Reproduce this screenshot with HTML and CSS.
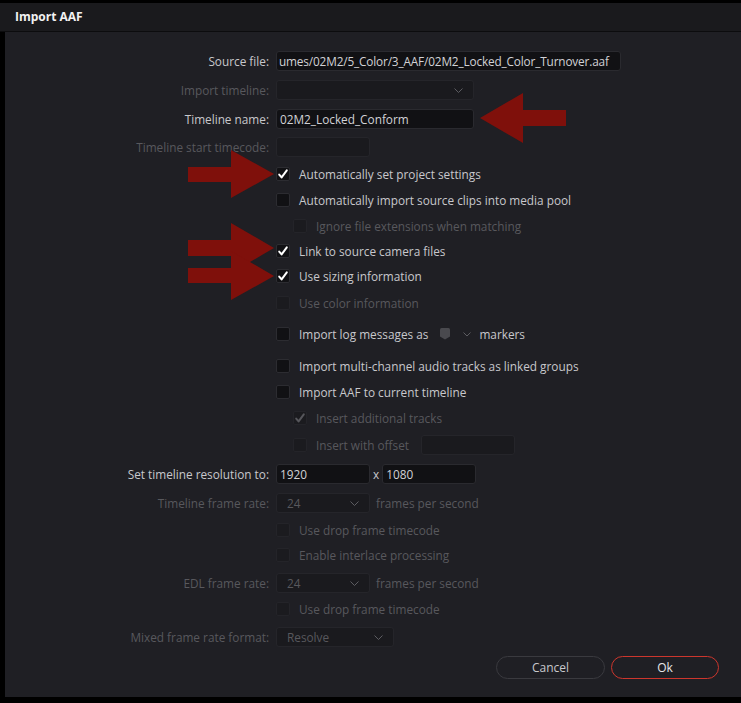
FILE: index.html
```html
<!DOCTYPE html>
<html>
<head>
<meta charset="utf-8">
<title>Import AAF</title>
<link rel="stylesheet" href="styles.css">
</head>
<body>
<div class="dialog">
  <div class="titlebar">Import AAF</div>
  <div class="panel">
    <div class="form">
      <div class="label">Source file:</div>
      <div class="ctrl"><div class="field w345 tight">umes/02M2/5_Color/3_AAF/02M2_Locked_Color_Turnover.aaf</div></div>

      <div class="label dis">Import timeline:</div>
      <div class="ctrl"><div class="field dis w198 select"><span></span><svg class="chev" width="9" height="5" viewBox="0 0 9 5"><polyline points="0.5,0.5 4.5,4.5 8.5,0.5"/></svg></div></div>

      <div class="label">Timeline name:</div>
      <div class="ctrl"><div class="field w198">02M2_Locked_Conform</div></div>

      <div class="label dis">Timeline start timecode:</div>
      <div class="ctrl"><div class="field dis w94"></div></div>

      <div class="ctrl"><div class="check"><span class="box on"><svg width="12" height="12" viewBox="0 0 12 12"><path class="tick" d="M2.2 6.6 L4.6 9.4 L9.8 2.4"/></svg></span><span>Automatically set project settings</span></div></div>
      <div class="ctrl"><div class="check"><span class="box"></span><span>Automatically import source clips into media pool</span></div></div>
      <div class="ctrl"><div class="check indent dis"><span class="box"></span><span>Ignore file extensions when matching</span></div></div>
      <div class="ctrl"><div class="check"><span class="box on"><svg width="12" height="12" viewBox="0 0 12 12"><path class="tick" d="M2.2 6.6 L4.6 9.4 L9.8 2.4"/></svg></span><span>Link to source camera files</span></div></div>
      <div class="ctrl"><div class="check"><span class="box on"><svg width="12" height="12" viewBox="0 0 12 12"><path class="tick" d="M2.2 6.6 L4.6 9.4 L9.8 2.4"/></svg></span><span>Use sizing information</span></div></div>
      <div class="ctrl"><div class="check dis"><span class="box"></span><span>Use color information</span></div></div>
      <div class="ctrl"><div class="check"><span class="box"></span><span>Import log messages as</span><span class="marker"><svg width="10" height="12" viewBox="0 0 10 12"><path d="M1.5 0 H8.5 Q10 0 10 1.5 V8.5 L5 11.5 L0 8.5 V1.5 Q0 0 1.5 0 Z"/></svg><svg class="chev" width="8" height="5" viewBox="0 0 8 5"><polyline points="0.5,0.5 4,4 7.5,0.5"/></svg></span><span>markers</span></div></div>
      <div class="ctrl"><div class="check"><span class="box"></span><span>Import multi-channel audio tracks as linked groups</span></div></div>
      <div class="ctrl"><div class="check"><span class="box"></span><span>Import AAF to current timeline</span></div></div>
      <div class="ctrl"><div class="check indent dis"><span class="box on"><svg width="12" height="12" viewBox="0 0 12 12"><path class="tick" d="M2.2 6.6 L4.6 9.4 L9.8 2.4"/></svg></span><span>Insert additional tracks</span></div></div>
      <div class="ctrl tall"><div class="check indent dis"><span class="box"></span><span>Insert with offset</span></div><div class="field dis w94 offset"></div></div>

      <div class="label">Set timeline resolution to:</div>
      <div class="ctrl"><div class="field w94">1920</div><span class="times">x</span><div class="field w94">1080</div></div>

      <div class="label dis">Timeline frame rate:</div>
      <div class="ctrl dis"><div class="field dis w94 select pad"><span>24</span><svg class="chev" width="9" height="5" viewBox="0 0 9 5"><polyline points="0.5,0.5 4.5,4.5 8.5,0.5"/></svg></div><span class="after">frames per second</span></div>

      <div class="ctrl"><div class="check dis"><span class="box"></span><span>Use drop frame timecode</span></div></div>
      <div class="ctrl"><div class="check dis"><span class="box"></span><span>Enable interlace processing</span></div></div>

      <div class="label dis">EDL frame rate:</div>
      <div class="ctrl dis"><div class="field dis w94 select pad"><span>24</span><svg class="chev" width="9" height="5" viewBox="0 0 9 5"><polyline points="0.5,0.5 4.5,4.5 8.5,0.5"/></svg></div><span class="after">frames per second</span></div>

      <div class="ctrl"><div class="check dis"><span class="box"></span><span>Use drop frame timecode</span></div></div>

      <div class="label dis">Mixed frame rate format:</div>
      <div class="ctrl"><div class="field dis w118 select pad"><span>Resolve</span><svg class="chev" width="9" height="5" viewBox="0 0 9 5"><polyline points="0.5,0.5 4.5,4.5 8.5,0.5"/></svg></div></div>
    </div>
    <div class="actions">
      <button class="btn">Cancel</button>
      <button class="btn ok">Ok</button>
    </div>
  </div>
</div>
<svg class="annotations" width="741" height="703" viewBox="0 0 741 703">
  <polygon points="480,118 523,93 523,110 566,110 566,126 523,126 523,143"/>
  <polygon points="188,167 231,167 231,150 274,174 231,198 231,182 188,182"/>
  <polygon points="188,240 231,240 231,223 274,248 231,273 231,256 188,256"/>
  <polygon points="188,268 231,268 231,251 274,276 231,300 231,283 188,283"/>
</svg>
</body>
</html>
```

FILE: styles.css
```css
html, body {
  margin: 0;
  padding: 0;
  background: #000;
}
body {
  font-family: "Open Sans", "Noto Sans", "DejaVu Sans", sans-serif;
  font-size: 11.8px;
  color: #c8c8cc;
  position: relative;
  width: 741px;
  height: 703px;
  overflow: hidden;
}
.dialog {
  margin-top: 3px;
  width: 741px;
  height: 694px;
  display: flex;
  flex-direction: column;
}
.titlebar {
  flex: none;
  height: 28px;
  line-height: 28px;
  padding-left: 15px;
  background: #1a1a1d;
  border-bottom: 1px solid #0c0c0e;
  color: #f2f2f2;
  font-weight: 700;
  font-size: 12px;
}
.panel {
  flex: 1;
  background: #1f1f24;
  border-left: 5px solid #000;
  padding-top: 19px;
  display: flex;
  flex-direction: column;
}
.form {
  display: grid;
  grid-template-columns: 264px auto;
  column-gap: 7px;
  grid-template-rows: 29px 29px 28px 30px 26px 26px 25px 25px 27px 31px 32px 26px 26px 24px 29px 29px 30px 25px 25px 29px 25px 29px;
  align-items: start;
}
.label {
  grid-column: 1;
  text-align: right;
  line-height: 20px;
  white-space: nowrap;
  color: #c8c8cc;
}
.label.dis { color: #58585d; }
.ctrl {
  grid-column: 2;
  display: flex;
  align-items: center;
  white-space: nowrap;
}
.ctrl.tall { height: 20px; }
.field {
  box-sizing: border-box;
  height: 20px;
  line-height: 18px;
  padding: 0 3px;
  background: #111114;
  border: 1px solid #2a2a2f;
  border-radius: 3px;
  color: #d2d2d6;
  overflow: hidden;
  white-space: nowrap;
}
.field.tight {
  letter-spacing: -0.15px;
  padding: 0 2px;
}
.field.dis {
  background: #1a1a1e;
  border-color: #25252a;
  color: #58585d;
}
.field.pad { padding-left: 10px; }
.select {
  display: flex;
  align-items: center;
  justify-content: space-between;
  padding-right: 10px;
}
.w345 { width: 345px; }
.w198 { width: 198px; }
.w118 { width: 118px; }
.w94 { width: 94px; }
.chev polyline {
  fill: none;
  stroke: #5c5c61;
  stroke-width: 1;
}
.check {
  display: flex;
  align-items: center;
  gap: 9px;
  height: 14px;
  line-height: 14px;
  color: #c8c8cc;
}
.check.dis { color: #58585d; }
.indent { margin-left: 17px; }
.box {
  flex: none;
  box-sizing: border-box;
  width: 14px;
  height: 14px;
  background: #111114;
  border: 1px solid #2c2c31;
  border-radius: 2px;
  display: flex;
  align-items: center;
  justify-content: center;
}
.check.dis .box {
  background: #1b1b1f;
  border-color: #242429;
}
.tick {
  fill: none;
  stroke: #ffffff;
  stroke-width: 2;
  stroke-linecap: round;
  stroke-linejoin: round;
}
.check.dis .tick { stroke: #56565b; }
.marker {
  display: flex;
  align-items: center;
  gap: 13px;
  margin-left: 3px;
  margin-right: -1px;
}
.marker path { fill: #49494e; }
.times {
  margin: 0 3px;
  color: #c8c8cc;
}
.after {
  margin-left: 6px;
  color: #58585d;
}
.offset { margin-left: 12px; }
.actions {
  display: flex;
  justify-content: flex-end;
  gap: 6px;
  padding-right: 22px;
}
.btn {
  box-sizing: border-box;
  width: 109px;
  height: 23px;
  padding: 0;
  background: #1f1f24;
  border: 1px solid #3a3a3f;
  border-radius: 12px;
  color: #c8c8cc;
  font-family: inherit;
  font-size: 12px;
  line-height: 21px;
  text-align: center;
}
.btn.ok {
  width: 108px;
  border-color: #cc362d;
  color: #e6e6e8;
}
.annotations {
  position: absolute;
  left: 0;
  top: 0;
  pointer-events: none;
}
.annotations polygon { fill: #7f100b; }
```
